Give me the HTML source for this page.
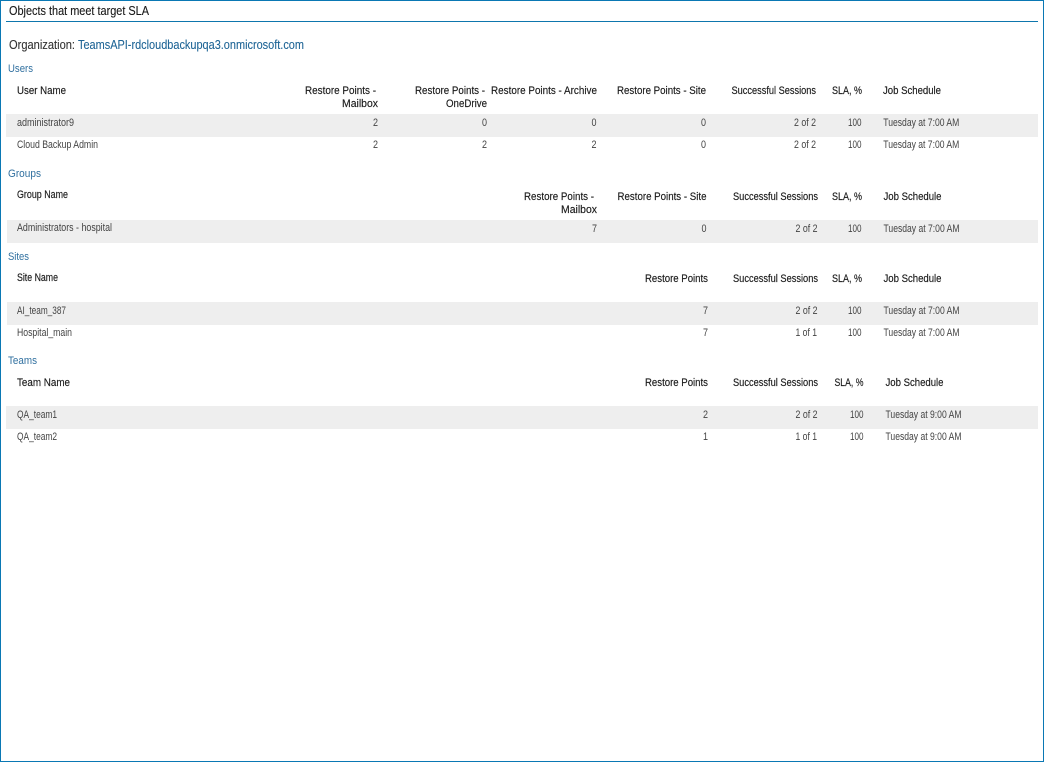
<!DOCTYPE html>
<html><head><meta charset="utf-8"><style>
html,body{margin:0;padding:0;background:#fff;width:1044px;height:762px;overflow:hidden}
svg{display:block}
text{font-family:"Liberation Sans",sans-serif;font-size:10.7px;fill:#444;white-space:pre}
.h{fill:#1a1a1a;stroke:#1a1a1a;stroke-width:.15px}
.l{fill:#2f6f9f;font-size:11px}
.t{fill:#1a1a1a;stroke:#1a1a1a;stroke-width:.12px;font-size:12.5px}
.o{fill:#333;stroke:#333;stroke-width:.1px;font-size:12.5px}
.b{fill:#1f6596;stroke:#1f6596;stroke-width:.1px;font-size:12.5px}
</style></head><body>
<svg width="1044" height="762" viewBox="0 0 1044 762" xmlns="http://www.w3.org/2000/svg">
<rect x=".5" y=".5" width="1043" height="761" fill="#fff" stroke="#0a78b4"/>
<rect x="6" y="21" width="1032" height="1" fill="#0e76ad"/>
<rect x="6" y="114" width="1032" height="23" fill="#eee"/>
<rect x="7" y="220" width="1031" height="23" fill="#eee"/>
<rect x="7" y="302" width="1031" height="23" fill="#eee"/>
<rect x="6" y="406" width="1032" height="23" fill="#eee"/>

<text class="t" x="9" y="15" textLength="140" lengthAdjust="spacingAndGlyphs">Objects that meet target SLA</text>
<text class="o" x="9" y="49" textLength="66" lengthAdjust="spacingAndGlyphs">Organization:</text>
<text class="b" x="78" y="49" textLength="226" lengthAdjust="spacingAndGlyphs">TeamsAPI-rdcloudbackupqa3.onmicrosoft.com</text>

<text class="l" x="8" y="72" textLength="25" lengthAdjust="spacingAndGlyphs">Users</text>
<text class="h" x="17" y="94" textLength="49" lengthAdjust="spacingAndGlyphs">User Name</text>
<text class="h" x="305" y="94" textLength="71" lengthAdjust="spacingAndGlyphs">Restore Points -</text>
<text class="h" x="342" y="107" textLength="36" lengthAdjust="spacingAndGlyphs">Mailbox</text>
<text class="h" x="415" y="94" textLength="70" lengthAdjust="spacingAndGlyphs">Restore Points -</text>
<text class="h" x="446" y="107" textLength="41" lengthAdjust="spacingAndGlyphs">OneDrive</text>
<text class="h" x="491" y="94" textLength="106" lengthAdjust="spacingAndGlyphs">Restore Points - Archive</text>
<text class="h" x="617" y="94" textLength="89" lengthAdjust="spacingAndGlyphs">Restore Points - Site</text>
<text class="h" x="731.5" y="94" textLength="84.5" lengthAdjust="spacingAndGlyphs">Successful Sessions</text>
<text class="h" x="832" y="94" textLength="30" lengthAdjust="spacingAndGlyphs">SLA, %</text>
<text class="h" x="883" y="94" textLength="58" lengthAdjust="spacingAndGlyphs">Job Schedule</text>

<text x="17" y="126" textLength="57" lengthAdjust="spacingAndGlyphs">administrator9</text>
<text x="373" y="126" textLength="5" lengthAdjust="spacingAndGlyphs">2</text>
<text x="482" y="126" textLength="5" lengthAdjust="spacingAndGlyphs">0</text>
<text x="591.5" y="126" textLength="5" lengthAdjust="spacingAndGlyphs">0</text>
<text x="701" y="126" textLength="5" lengthAdjust="spacingAndGlyphs">0</text>
<text x="794" y="126" textLength="22" lengthAdjust="spacingAndGlyphs">2 of 2</text>
<text x="848" y="126" textLength="13.5" lengthAdjust="spacingAndGlyphs">100</text>
<text x="883.3" y="126" textLength="76" lengthAdjust="spacingAndGlyphs">Tuesday at 7:00 AM</text>

<text x="17" y="148" textLength="81" lengthAdjust="spacingAndGlyphs">Cloud Backup Admin</text>
<text x="373" y="148" textLength="5" lengthAdjust="spacingAndGlyphs">2</text>
<text x="482" y="148" textLength="5" lengthAdjust="spacingAndGlyphs">2</text>
<text x="591.5" y="148" textLength="5" lengthAdjust="spacingAndGlyphs">2</text>
<text x="701" y="148" textLength="5" lengthAdjust="spacingAndGlyphs">0</text>
<text x="794" y="148" textLength="22" lengthAdjust="spacingAndGlyphs">2 of 2</text>
<text x="848" y="148" textLength="13.5" lengthAdjust="spacingAndGlyphs">100</text>
<text x="883.3" y="148" textLength="76" lengthAdjust="spacingAndGlyphs">Tuesday at 7:00 AM</text>

<text class="l" x="8" y="177" textLength="33" lengthAdjust="spacingAndGlyphs">Groups</text>
<text class="h" x="17" y="198" textLength="51" lengthAdjust="spacingAndGlyphs">Group Name</text>
<text class="h" x="524" y="200" textLength="70" lengthAdjust="spacingAndGlyphs">Restore Points -</text>
<text class="h" x="561" y="213" textLength="36" lengthAdjust="spacingAndGlyphs">Mailbox</text>
<text class="h" x="617.5" y="200" textLength="89" lengthAdjust="spacingAndGlyphs">Restore Points - Site</text>
<text class="h" x="733" y="200" textLength="85" lengthAdjust="spacingAndGlyphs">Successful Sessions</text>
<text class="h" x="832" y="200" textLength="30" lengthAdjust="spacingAndGlyphs">SLA, %</text>
<text class="h" x="883.5" y="200" textLength="58" lengthAdjust="spacingAndGlyphs">Job Schedule</text>
<text x="17" y="231" textLength="95" lengthAdjust="spacingAndGlyphs">Administrators - hospital</text>
<text x="592" y="232" textLength="5" lengthAdjust="spacingAndGlyphs">7</text>
<text x="701.5" y="232" textLength="5" lengthAdjust="spacingAndGlyphs">0</text>
<text x="795.5" y="232" textLength="22" lengthAdjust="spacingAndGlyphs">2 of 2</text>
<text x="848" y="232" textLength="13.5" lengthAdjust="spacingAndGlyphs">100</text>
<text x="883.5" y="232" textLength="76" lengthAdjust="spacingAndGlyphs">Tuesday at 7:00 AM</text>

<text class="l" x="8" y="260" textLength="21" lengthAdjust="spacingAndGlyphs">Sites</text>
<text class="h" x="17" y="281" textLength="41" lengthAdjust="spacingAndGlyphs">Site Name</text>
<text class="h" x="645" y="282" textLength="63" lengthAdjust="spacingAndGlyphs">Restore Points</text>
<text class="h" x="733" y="282" textLength="85" lengthAdjust="spacingAndGlyphs">Successful Sessions</text>
<text class="h" x="832" y="282" textLength="30" lengthAdjust="spacingAndGlyphs">SLA, %</text>
<text class="h" x="883.5" y="282" textLength="58" lengthAdjust="spacingAndGlyphs">Job Schedule</text>
<text x="17" y="314" textLength="49" lengthAdjust="spacingAndGlyphs">AI_team_387</text>
<text x="703" y="314" textLength="5" lengthAdjust="spacingAndGlyphs">7</text>
<text x="795.5" y="314" textLength="22" lengthAdjust="spacingAndGlyphs">2 of 2</text>
<text x="848" y="314" textLength="13.5" lengthAdjust="spacingAndGlyphs">100</text>
<text x="883.5" y="314" textLength="76" lengthAdjust="spacingAndGlyphs">Tuesday at 7:00 AM</text>
<text x="17" y="336" textLength="55" lengthAdjust="spacingAndGlyphs">Hospital_main</text>
<text x="703" y="336" textLength="5" lengthAdjust="spacingAndGlyphs">7</text>
<text x="795.5" y="336" textLength="21.5" lengthAdjust="spacingAndGlyphs">1 of 1</text>
<text x="848" y="336" textLength="13.5" lengthAdjust="spacingAndGlyphs">100</text>
<text x="883.5" y="336" textLength="76" lengthAdjust="spacingAndGlyphs">Tuesday at 7:00 AM</text>

<text class="l" x="8" y="364" textLength="29" lengthAdjust="spacingAndGlyphs">Teams</text>
<text class="h" x="17" y="386" textLength="53" lengthAdjust="spacingAndGlyphs">Team Name</text>
<text class="h" x="645" y="386" textLength="63" lengthAdjust="spacingAndGlyphs">Restore Points</text>
<text class="h" x="733" y="386" textLength="85" lengthAdjust="spacingAndGlyphs">Successful Sessions</text>
<text class="h" x="834.5" y="386" textLength="29" lengthAdjust="spacingAndGlyphs">SLA, %</text>
<text class="h" x="885.5" y="386" textLength="58" lengthAdjust="spacingAndGlyphs">Job Schedule</text>
<text x="17" y="418" textLength="40" lengthAdjust="spacingAndGlyphs">QA_team1</text>
<text x="703" y="418" textLength="5" lengthAdjust="spacingAndGlyphs">2</text>
<text x="795.5" y="418" textLength="22" lengthAdjust="spacingAndGlyphs">2 of 2</text>
<text x="850" y="418" textLength="13.5" lengthAdjust="spacingAndGlyphs">100</text>
<text x="885.5" y="418" textLength="76" lengthAdjust="spacingAndGlyphs">Tuesday at 9:00 AM</text>
<text x="17" y="440" textLength="40" lengthAdjust="spacingAndGlyphs">QA_team2</text>
<text x="703" y="440" textLength="5" lengthAdjust="spacingAndGlyphs">1</text>
<text x="795.5" y="440" textLength="21.5" lengthAdjust="spacingAndGlyphs">1 of 1</text>
<text x="850" y="440" textLength="13.5" lengthAdjust="spacingAndGlyphs">100</text>
<text x="885.5" y="440" textLength="76" lengthAdjust="spacingAndGlyphs">Tuesday at 9:00 AM</text>
</svg>
</body></html>
